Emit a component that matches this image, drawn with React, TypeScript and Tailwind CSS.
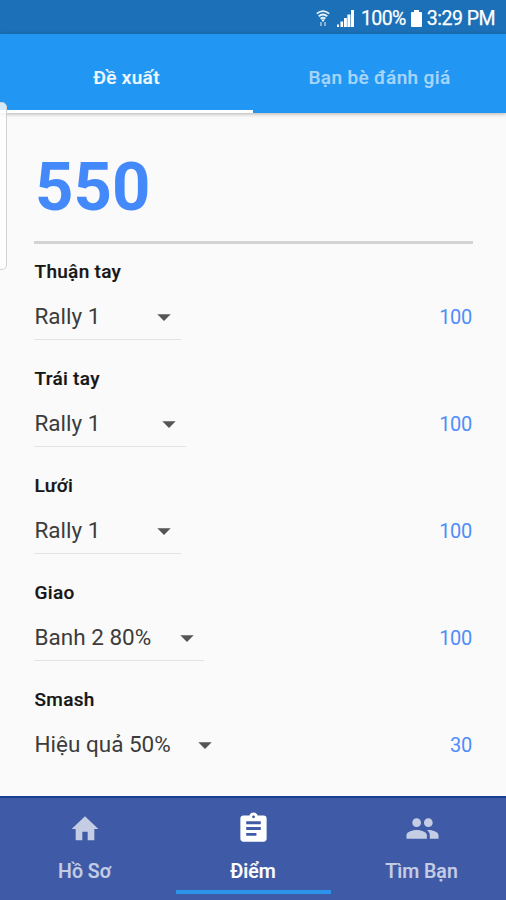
import { useState } from "react";
import { MdArrowDropDown, MdAssignment, MdHome, MdPeople } from "react-icons/md";

const skills = [
  { label: "Thuận tay", level: "Rally 1", points: 100, width: "w-[147px]", line: true },
  { label: "Trái tay", level: "Rally 1", points: 100, width: "w-[152px]", line: true },
  { label: "Lưới", level: "Rally 1", points: 100, width: "w-[147px]", line: true },
  { label: "Giao", level: "Banh 2 80%", points: 100, width: "w-[170px]", line: true },
  { label: "Smash", level: "Hiệu quả 50%", points: 30, width: "w-[188px]", line: false },
];

const StatusBar = () => (
  <div className="h-[34px] bg-[#1b70b7] flex items-center justify-end pr-[11px] pt-[3px] text-white text-[19.5px]">
    <svg className="w-[14px] h-[17px] mr-[7px]" viewBox="0 0 14 17" fill="none" stroke="#fff">
      <path d="M.8 3.600Q7-1.200 13.200 3.600M2.700 6.300Q7 2.800 11.300 6.300M4.600 8.800Q7 6.800 9.400 8.800" strokeWidth="1.800" opacity=".9" />
      <path d="M5.2 9.600h3.600L7 12z" fill="#fff" stroke="none" />
      <path d="M5 12v4M9 12v4" strokeWidth="1.700" opacity=".55" />
    </svg>
    <svg className="w-[17px] h-[17px] mr-[7px]" viewBox="0 0 17 17" fill="#fff">
      <path d="M0 14.500h2V17H0zM3.500 11.500h2.600V17H3.500zM7 8h2.900v9H7zM10.400 4.500h3V17h-3zM14 0h3v17h-3z" />
    </svg>
    <span className="tracking-[-0.6px] [-webkit-text-stroke:0.25px_#fff]">100%</span>
    <svg className="w-[11px] h-[17px] mx-[5px]" viewBox="0 0 11 17" fill="#fff">
      <path d="M3 0h5v2h2q1 0 1 1v13q0 1-1 1H1q-1 0-1-1V3q0-1 1-1h2z" />
    </svg>
    <span className="tracking-[-0.5px] [-webkit-text-stroke:0.25px_#fff]">3:29 PM</span>
  </div>
);

const MainContent = () => (
  <main className="flex-1 px-[34px] overflow-hidden">
    <div className="h-[131px] pt-[34px] border-b-[3px] border-[#d3d3d3] mr-[-1px]">
      <p className="pl-px text-[67px] leading-[80px] font-bold text-[#4489fa]">550</p>
    </div>
    <div className="pt-[16px]">
      {skills.map((skill) => (
        <section key={skill.label} className="h-[107px]">
          <h2 className="h-[25px] leading-[24px] pl-[0.5px] text-[19px] tracking-[0.3px] font-medium text-[#161616] [-webkit-text-stroke:0.2px_#161616]">
            {skill.label}
          </h2>
          <div className="flex justify-between mt-[8px]">
            <button
              type="button"
              className={`h-[47px] pt-px flex items-center justify-between text-[22.5px] text-[#3c3c3c] border-b ${skill.width} ${
                skill.line ? "border-[#e3e3e3]" : "border-transparent"
              }`}
            >
              <span className="pl-[0.5px]">{skill.level}</span>
              <MdArrowDropDown className="w-[32px] h-[32px] mr-px text-[#555]" />
            </button>
            <span className="h-[48px] leading-[48px] text-[20px] tracking-[-0.3px] text-[#4f8df8]">
              {skill.points}
            </span>
          </div>
        </section>
      ))}
    </div>
  </main>
);

export default function App() {
  const [activeTab, setActiveTab] = useState("suggest");

  return (
    <div className="relative w-[506px] h-[900px] overflow-hidden flex flex-col bg-[#fafafa] font-[Roboto,sans-serif]">
      <StatusBar />
      <nav className="h-[79px] bg-[#2196f3] grid grid-cols-2 text-[19px] tracking-[0.35px] font-medium [-webkit-text-stroke:0.2px_currentColor] shadow-[0_1px_4px_rgba(0,0,0,0.3)]">
        <button
          type="button"
          className={`pt-[13px] border-b-[3px] ${
            activeTab === "suggest" ? "border-white text-[#eef8ff]" : "border-transparent text-[#a6d5fa]"
          }`}
          onClick={() => setActiveTab("suggest")}
        >
          Đề xuất
        </button>
        <button
          type="button"
          className={`pt-[13px] border-b-[3px] ${
            activeTab === "friends" ? "border-white text-[#eef8ff]" : "border-transparent text-[#a6d5fa]"
          }`}
          onClick={() => setActiveTab("friends")}
        >
          Bạn bè đánh giá
        </button>
      </nav>
      <MainContent />
      <footer className="h-[104px] bg-[#3f5aa6] border-t-2 border-[#173f94] flex justify-center text-[19.5px] font-medium text-[#c5cde4] [-webkit-text-stroke:0.2px_currentColor]">
        <button type="button" className="w-[169px] flex flex-col items-center">
          <MdHome className="w-[32px] h-[34px] mt-[14px]" preserveAspectRatio="none" />
          <span className="mt-[12px] leading-[28px]">Hồ Sơ</span>
        </button>
        <button type="button" className="w-[168px] flex flex-col items-center text-white">
          <MdAssignment className="w-[35px] h-[35px] mt-[13px]" />
          <span className="mt-[12px] leading-[28px]">Điểm</span>
          <span className="w-[155px] h-[4px] mt-[4px] bg-[#2b93ea]" />
        </button>
        <button type="button" className="w-[169px] flex flex-col items-center">
          <MdPeople className="w-[35px] h-[35px] mt-[13px] ml-[2px]" />
          <span className="mt-[12px] leading-[28px]">Tìm Bạn</span>
        </button>
      </footer>
      {/* edge panel handle floats over the tabs and the page */}
      <div className="absolute left-[-4px] top-[102px] w-[11px] h-[168px] rounded-[5px] border border-[#d2d2d2] bg-white/80" />
    </div>
  );
}
